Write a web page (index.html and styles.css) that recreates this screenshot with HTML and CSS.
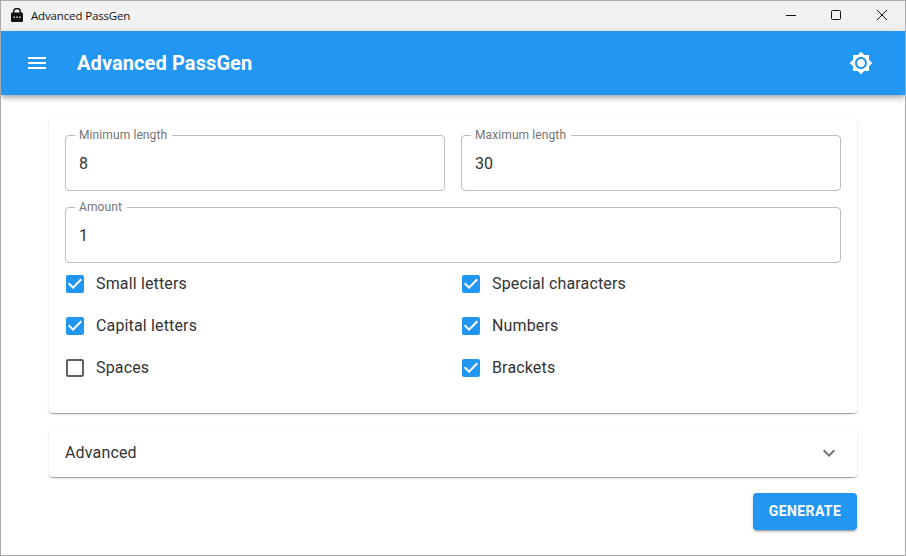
FILE: index.html
```html
<!DOCTYPE html>
<html lang="en">
<head>
    <meta charset="UTF-8">
    <title>Advanced PassGen</title>
    <link rel="stylesheet" href="styles.css">
</head>
<body>
    <div class="window">
        <div class="titlebar">
            <svg class="title-icon" width="16" height="16" viewBox="0 0 16 16">
                <path d="M4.7 5V3.8a3.3 3.3 0 0 1 6.6 0V5" fill="none" stroke="#111" stroke-width="1.5"/>
                <rect x="2" y="4.5" width="12" height="9.5" rx="1.2" fill="#111"/>
                <rect x="4.5" y="8.5" width="1.4" height="1.4" fill="#fff"/>
                <rect x="7.3" y="8.5" width="1.4" height="1.4" fill="#fff"/>
                <rect x="10.1" y="8.5" width="1.4" height="1.4" fill="#fff"/>
            </svg>
            <span class="title-text">Advanced PassGen</span>
            <div class="window-buttons">
                <svg width="46" height="30" viewBox="0 0 46 30"><path d="M19 14.5h10" stroke="#111" fill="none"/></svg>
                <svg width="46" height="30" viewBox="0 0 46 30"><rect x="18.5" y="9.5" width="9" height="9" rx="1" stroke="#111" fill="none"/></svg>
                <svg width="46" height="30" viewBox="0 0 46 30"><path d="M18 9l10 10M28 9L18 19" stroke="#111" fill="none"/></svg>
            </div>
        </div>

        <header class="appbar">
            <svg class="menu-icon" width="24" height="24" viewBox="0 0 24 24" fill="#fff">
                <path d="M3 18h18v-2H3v2zm0-5h18v-2H3v2zm0-7v2h18V6H3z"/>
            </svg>
            <h1 class="app-title">Advanced PassGen</h1>
            <svg class="theme-icon" width="24" height="24" viewBox="0 0 24 24" fill="#fff">
                <path d="M20 8.69V4h-4.69L12 .69 8.69 4H4v4.69L.69 12 4 15.31V20h4.69L12 23.31 15.31 20H20v-4.69L23.31 12 20 8.69zM12 18c-3.31 0-6-2.69-6-6s2.69-6 6-6 6 2.69 6 6-2.69 6-6 6zm0-10c-2.21 0-4 1.79-4 4s1.79 4 4 4 4-1.79 4-4-1.79-4-4-4z"/>
            </svg>
        </header>

        <main class="content">
            <section class="card options">
                <div class="field-row">
                    <fieldset class="field">
                        <legend>Minimum length</legend>
                        <span class="field-value">8</span>
                    </fieldset>
                    <fieldset class="field">
                        <legend>Maximum length</legend>
                        <span class="field-value">30</span>
                    </fieldset>
                </div>
                <fieldset class="field">
                    <legend>Amount</legend>
                    <span class="field-value">1</span>
                </fieldset>
                <div class="checks">
                    <label class="check">
                        <svg class="box on" width="24" height="24" viewBox="0 0 24 24"><path d="M19 3H5c-1.11 0-2 .9-2 2v14c0 1.1.89 2 2 2h14c1.11 0 2-.9 2-2V5c0-1.11-.89-2-2-2zm-9 14l-5-5 1.41-1.41L10 14.17l7.59-7.59L19 8l-9 9z"/></svg>
                        <span class="check-text">Small letters</span>
                    </label>
                    <label class="check">
                        <svg class="box on" width="24" height="24" viewBox="0 0 24 24"><path d="M19 3H5c-1.11 0-2 .9-2 2v14c0 1.1.89 2 2 2h14c1.11 0 2-.9 2-2V5c0-1.11-.89-2-2-2zm-9 14l-5-5 1.41-1.41L10 14.17l7.59-7.59L19 8l-9 9z"/></svg>
                        <span class="check-text">Special characters</span>
                    </label>
                    <label class="check">
                        <svg class="box on" width="24" height="24" viewBox="0 0 24 24"><path d="M19 3H5c-1.11 0-2 .9-2 2v14c0 1.1.89 2 2 2h14c1.11 0 2-.9 2-2V5c0-1.11-.89-2-2-2zm-9 14l-5-5 1.41-1.41L10 14.17l7.59-7.59L19 8l-9 9z"/></svg>
                        <span class="check-text">Capital letters</span>
                    </label>
                    <label class="check">
                        <svg class="box on" width="24" height="24" viewBox="0 0 24 24"><path d="M19 3H5c-1.11 0-2 .9-2 2v14c0 1.1.89 2 2 2h14c1.11 0 2-.9 2-2V5c0-1.11-.89-2-2-2zm-9 14l-5-5 1.41-1.41L10 14.17l7.59-7.59L19 8l-9 9z"/></svg>
                        <span class="check-text">Numbers</span>
                    </label>
                    <label class="check">
                        <svg class="box" width="24" height="24" viewBox="0 0 24 24"><path d="M19 5v14H5V5h14m0-2H5c-1.1 0-2 .9-2 2v14c0 1.1.9 2 2 2h14c1.1 0 2-.9 2-2V5c0-1.1-.9-2-2-2z"/></svg>
                        <span class="check-text">Spaces</span>
                    </label>
                    <label class="check">
                        <svg class="box on" width="24" height="24" viewBox="0 0 24 24"><path d="M19 3H5c-1.11 0-2 .9-2 2v14c0 1.1.89 2 2 2h14c1.11 0 2-.9 2-2V5c0-1.11-.89-2-2-2zm-9 14l-5-5 1.41-1.41L10 14.17l7.59-7.59L19 8l-9 9z"/></svg>
                        <span class="check-text">Brackets</span>
                    </label>
                </div>
            </section>

            <section class="card accordion">
                <span class="check-text">Advanced</span>
                <svg width="24" height="24" viewBox="0 0 24 24" fill="#757575">
                    <path d="M16.59 8.59 12 13.17 7.41 8.59 6 10l6 6 6-6z"/>
                </svg>
            </section>

            <div class="actions">
                <button class="generate">Generate</button>
            </div>
        </main>
    </div>
</body>
</html>
```

FILE: styles.css
```css
* {
    box-sizing: border-box;
}
body {
    margin: 0;
    font-family: Roboto, sans-serif;
    color: #333;
    background-color: #fff;
}
.window {
    width: 906px;
    height: 556px;
    border: 1px solid #a9a9a9;
    overflow: hidden;
}
.titlebar {
    display: flex;
    align-items: center;
    height: 30px;
    background-color: #f2f2f2;
}
.title-icon {
    margin-left: 8px;
}
.title-text {
    margin-left: 6px;
    padding-bottom: 2px;
    font-family: "Open Sans", sans-serif;
    font-size: 11.5px;
    letter-spacing: -0.15px;
    color: #111;
}
.window-buttons {
    display: flex;
    margin-left: auto;
}
.appbar {
    position: relative;
    display: flex;
    align-items: center;
    height: 64px;
    padding: 0 32px 0 24px;
    background-color: #2196f3;
    box-shadow: 0 2px 4px -1px rgba(0,0,0,0.2), 0 4px 5px 0 rgba(0,0,0,0.14), 0 1px 10px 0 rgba(0,0,0,0.12);
}
.app-title {
    margin: 0 0 0 28px;
    font-size: 20px;
    font-weight: 700;
    letter-spacing: 0.1px;
    color: #fff;
}
.theme-icon {
    margin-left: auto;
}
.content {
    padding: 24px 48px 0;
}
.card {
    background-color: #fff;
    border-radius: 4px;
    box-shadow: 0 2px 1px -1px rgba(0,0,0,0.2), 0 1px 1px 0 rgba(0,0,0,0.14), 0 1px 3px 0 rgba(0,0,0,0.12);
}
.options {
    display: flex;
    flex-direction: column;
    gap: 16px;
    height: 294px;
    padding: 16px;
}
.field-row {
    display: grid;
    grid-template-columns: 1fr 1fr;
    gap: 16px;
}
/* the legend sits on the border, so the box starts 6px above the line */
.field {
    height: 62px;
    min-width: 0;
    margin: -6px 0 0;
    padding: 0 13px;
    border: 1px solid #bdbdbd;
    border-radius: 4px;
    line-height: 1;
}
.field legend {
    padding: 0 5px 0 4px;
    margin-left: -4px;
    font-size: 12px;
    line-height: 12px;
    letter-spacing: 0.1px;
    color: #757575;
}
.field-value {
    display: block;
    margin-top: 13px;
    font-size: 16px;
    line-height: 19px;
    color: #333;
}
.checks {
    display: grid;
    grid-template-columns: 1fr 1fr;
    grid-auto-rows: 42px;
    column-gap: 16px;
    margin-top: -16px;
}
.check {
    display: flex;
    align-items: center;
    gap: 9px;
    font-size: 16px;
    letter-spacing: 0.15px;
}
.check-text {
    padding-bottom: 2px;
}
.box {
    margin-left: -2px;
    fill: #616161;
}
.box.on {
    fill: #2196f3;
}
.accordion {
    display: flex;
    align-items: center;
    justify-content: space-between;
    height: 48px;
    margin-top: 16px;
    padding: 0 16px;
    font-size: 16px;
    letter-spacing: 0.15px;
}
.actions {
    display: flex;
    justify-content: flex-end;
    margin-top: 16px;
}
.generate {
    width: 104px;
    height: 37px;
    padding: 0 0 2px;
    border: none;
    border-radius: 4px;
    background-color: #2196f3;
    color: #fff;
    font-family: Roboto, sans-serif;
    font-size: 14px;
    font-weight: 700;
    letter-spacing: 0.4px;
    text-transform: uppercase;
    box-shadow: 0 3px 1px -2px rgba(0,0,0,0.2), 0 2px 2px 0 rgba(0,0,0,0.14), 0 1px 5px 0 rgba(0,0,0,0.12);
}
```
